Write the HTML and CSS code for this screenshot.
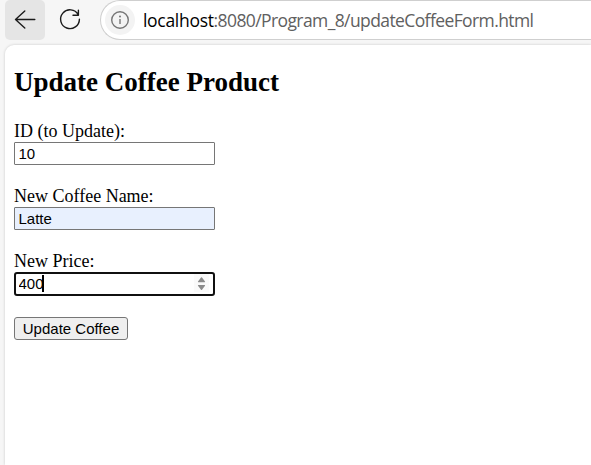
FILE: index.html
```html
<!DOCTYPE html>
<html lang="en">
<head>
<meta charset="utf-8">
<title>Update Coffee Product</title>
<link rel="stylesheet" href="styles.css">
</head>
<body>
<header class="toolbar">
  <button class="nav back" aria-label="Back">
    <svg width="40" height="40" viewBox="0 0 40 40"><path d="M29.8 19.5H10.5M19.8 11L10.5 19.5L19.8 28"/></svg>
  </button>
  <button class="nav reload" aria-label="Reload">
    <svg width="40" height="40" viewBox="0 0 40 40"><path d="M33.2 14.6A9.4 9.4 0 1 0 34.4 19.2M33.4 10.2V15.3H28"/></svg>
  </button>
  <div class="address">
    <span class="info">
      <svg width="30" height="30" viewBox="0 0 30 30"><circle cx="15" cy="15" r="8.3"/><path d="M15 14V19"/><circle class="dot" cx="15" cy="11.5" r="1"/></svg>
    </span>
    <span class="url"><span class="host">localhost</span>:8080/Program_8/updateCoffeeForm.html</span>
  </div>
</header>
<main class="page">
  <h2>Update Coffee Product</h2>
  <form>
    <label for="id">ID (to Update):</label>
    <input id="id" type="text" value="10">
    <label for="name">New Coffee Name:</label>
    <input id="name" class="filled" type="text" value="Latte">
    <label for="price">New Price:</label>
    <div class="field">
      <input id="price" class="active" type="text" value="400">
      <span class="caret"></span>
      <svg class="spinner" width="15" height="18" viewBox="0 0 15 18"><path d="M4 7.5L7 3.5Q7.5 3 8 3.5L11 7.5Q11.4 8.2 10.6 8.2H4.4Q3.6 8.2 4 7.5ZM4 11.8L7 15.8Q7.5 16.3 8 15.8L11 11.8Q11.4 11.1 10.6 11.1H4.4Q3.6 11.1 4 11.8Z"/></svg>
    </div>
    <button class="submit" type="button">Update Coffee</button>
  </form>
</main>
</body>
</html>
```
FILE: styles.css
```css
* { box-sizing: border-box; }
body {
  margin: 0;
  height: 465px;
  overflow: hidden;
  display: flex;
  flex-direction: column;
  background: #f6f6f6;
}
.toolbar {
  display: flex;
  height: 40px;
  margin-bottom: 5px;
  padding-left: 5px;
}
.nav {
  width: 40px;
  height: 40px;
  padding: 0;
  border: 0;
  background: none;
}
.nav svg {
  display: block;
  fill: none;
  stroke: #1b1b1b;
  stroke-width: 1.4;
  stroke-linecap: round;
  stroke-linejoin: round;
}
.back {
  background: #e5e5e5;
  border-radius: 5px;
}
.address {
  flex: 1;
  display: flex;
  align-items: center;
  height: 40px;
  margin-left: 15px;
  padding-left: 4px;
  border: 1px solid #cfcfcf;
  border-right: 0;
  border-radius: 20px 0 0 20px;
  background: #fff;
}
.info {
  width: 30px;
  height: 30px;
  border-radius: 50%;
  background: #f3f3f3;
}
.info svg {
  display: block;
  fill: none;
  stroke: #767676;
  stroke-width: 1.4;
}
.info .dot {
  fill: #767676;
  stroke: none;
}
.url {
  margin-left: 8px;
  font: 17.5px/24px "Open Sans", sans-serif;
  letter-spacing: -0.6px;
  color: #606060;
  white-space: nowrap;
}
.host {
  color: #000;
  letter-spacing: -0.3px;
}
.page {
  flex: 1;
  margin-left: 5px;
  padding: 22px 9px 0;
  border-radius: 9px 0 0;
  background: #fff;
  box-shadow: 0 0 3px rgba(0, 0, 0, 0.18);
  font: 18px/21px "Liberation Serif", serif;
  color: #000;
}
h2 {
  margin: 0 0 23px;
  font-size: 27px;
  line-height: 31px;
}
form {
  display: flex;
  flex-direction: column;
  align-items: flex-start;
}
input {
  display: block;
  width: 201px;
  height: 23px;
  margin: 0 0 21px;
  padding: 1px 3.5px;
  border: 1px solid #767676;
  border-radius: 1px;
  outline: 0;
  background: #fff;
  font: 15px "Liberation Sans", sans-serif;
  color: #000;
}
.filled { background: #e8f0fe; }
.field {
  position: relative;
  margin-bottom: 21px;
}
.active {
  height: 24px;
  margin: 0;
  padding: 0 2.5px 2px;
  border: 2px solid #101010;
  border-radius: 3px;
}
.caret {
  position: absolute;
  left: 28px;
  top: 3px;
  width: 2px;
  height: 17px;
  background: #000;
}
.spinner {
  position: absolute;
  right: 6px;
  top: 2px;
  background: #fafafa;
  fill: #8b8b8b;
}
.submit {
  width: 114px;
  height: 23px;
  padding: 0;
  border: 1px solid #767676;
  border-radius: 3px;
  background: #efefef;
  font: 15px "Liberation Sans", sans-serif;
  color: #000;
}
```
